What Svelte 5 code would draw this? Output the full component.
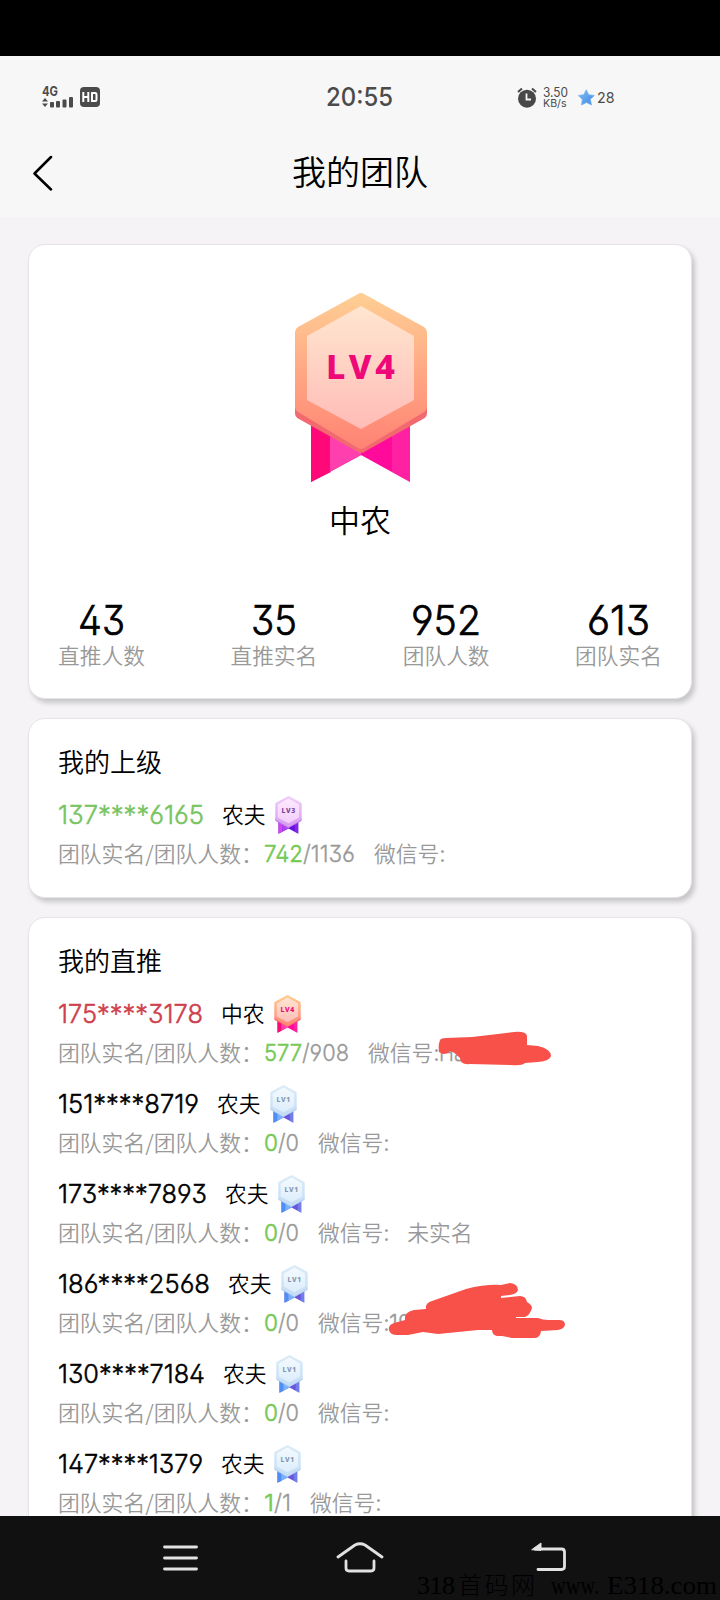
<script>
  const stats = [
    { value: '43', label: '直推人数', width: 47 },
    { value: '35', label: '直推实名', width: 46 },
    { value: '952', label: '团队人数', width: 70 },
    { value: '613', label: '团队实名', width: 63 },
  ];

  const leader = { phone: '137****6165', phoneWidth: 146, tone: 'green', rank: '农夫', level: 3, real: '742', realWidth: 39, total: '/1136', totalWidth: 52, note: '' };

  const members = [
    { phone: '175****3178', phoneWidth: 145, tone: 'red', rank: '中农', level: 4, real: '577', realWidth: 38, total: '/908', totalWidth: 47, note: 'Ha', noteWidth: 26 },
    { phone: '151****8719', phoneWidth: 141, tone: 'black', rank: '农夫', level: 1, real: '0', realWidth: 14, total: '/0', totalWidth: 21, note: '' },
    { phone: '173****7893', phoneWidth: 149, tone: 'black', rank: '农夫', level: 1, real: '0', realWidth: 14, total: '/0', totalWidth: 21, note: '', status: '未实名' },
    { phone: '186****2568', phoneWidth: 152, tone: 'black', rank: '农夫', level: 1, real: '0', realWidth: 14, total: '/0', totalWidth: 21, note: '19', noteWidth: 22 },
    { phone: '130****7184', phoneWidth: 147, tone: 'black', rank: '农夫', level: 1, real: '0', realWidth: 14, total: '/0', totalWidth: 21, note: '' },
    { phone: '147****1379', phoneWidth: 145, tone: 'black', rank: '农夫', level: 1, real: '1', realWidth: 10, total: '/1', totalWidth: 17, note: '' },
  ];

  const palettes = {
    1: { rimA: '#dcecf7', rimB: '#c3dcf6', faceA: '#f4faff', faceB: '#dcedfb', edge: '#b5d0f2', left: '#4f8ef5', midA: '#79b2fb', right: '#6a55dd', text: '#8796b0' },
    3: { rimA: '#eed0f8', rimB: '#d79af2', faceA: '#fdeaff', faceB: '#f3cdfc', edge: '#c07be8', left: '#d345e8', midA: '#a845ee', right: '#6410e0', text: '#76459c' },
    4: { rimA: '#ffcf94', rimB: '#ff8274', faceA: '#ffe6d0', faceB: '#ffbcb7', edge: '#f26a70', left: '#ff0878', midA: '#ff3fae', right: '#ff0a9a', text: '#ee0878' },
  };
</script>

{#snippet fit(text, width, size, cls)}
  <svg class={cls} {width} height={size} overflow="visible">
    <text x="0" y={size * 0.86} font-size={size} textLength={width} lengthAdjust="spacingAndGlyphs">{text}</text>
  </svg>
{/snippet}

{#snippet badge(level, id, w, h)}
  {@const c = palettes[level]}
  <svg width={w} height={h} viewBox="0 0 132 190" class="badge">
    <defs>
      <linearGradient id="{id}-rim" x1="0" y1="0" x2="0" y2="1"><stop offset="0" stop-color={c.rimA} /><stop offset="1" stop-color={c.rimB} /></linearGradient>
      <linearGradient id="{id}-face" x1="0" y1="0" x2="0" y2="1"><stop offset="0" stop-color={c.faceA} /><stop offset="1" stop-color={c.faceB} /></linearGradient>
    </defs>
    <path d="M16 118H115V189L66 162L16 189Z" fill={c.right} />
    <path d="M16 118H36V179L16 189Z" fill={c.left} />
    <path d="M35 128L66 150V162L35 179Z" fill={c.midA} />
    <path d="M97 134L115 125V189L97 179Z" fill={c.midA} opacity="0.45" />
    <path d="M0 114H132V120Q132 124 128 126L69 159Q66 161 63 159L4 126Q0 124 0 120Z" fill={c.edge} />
    <path d="M63 1Q66 -1 69 1L129 34Q132 36 132 39V114Q132 117 129 119L69 155Q66 157 63 155L3 119Q0 117 0 114V39Q0 36 3 34Z" fill="url(#{id}-rim)" />
    <path d="M66 13L119 43V107L66 136L12 107V43Z" fill="url(#{id}-face)" />
    <text class="lv" x="31" y="86" textLength="69" font-size="34" font-weight="800" fill={c.text}>LV{level}</text>
  </svg>
{/snippet}

{#snippet person(p, id)}
  <div class="person">
    <div class="name-line {p.tone}">
      {@render fit(p.phone, p.phoneWidth, 26, 'num')}
      <span class="rank">{p.rank}</span>
      {@render badge(p.level, id, 27, 38)}
    </div>
    <div class="detail">
      <span class="cap">团队实名<i>/</i>团队人数：</span>
      <span class="real">{@render fit(p.real, p.realWidth, 23, 'num')}</span>
      {@render fit(p.total, p.totalWidth, 23, 'num')}
      <span class="wechat">微信号:</span>
      {#if p.note}{@render fit(p.note, p.noteWidth, 23, 'num')}{/if}
      {#if p.status}<span class="status-note">{p.status}</span>{/if}
    </div>
  </div>
{/snippet}

<div class="screen">
  <div class="notch"></div>
  <header>
    <div class="statusbar">
      <div class="left">
        <svg class="signal" width="32" height="24" viewBox="0 0 32 24">
          <text x="0" y="11" font-size="13" font-weight="700" textLength="16" lengthAdjust="spacingAndGlyphs">4G</text>
          <path d="M0 16.5L3 13L6 16.5ZM0 18.5H6L3 22Z" />
          <rect x="8" y="17" width="4" height="5.500" rx="1" />
          <rect x="14" y="16" width="4" height="6.500" rx="1" />
          <rect x="20.5" y="14.5" width="4" height="8" rx="1" />
          <rect x="27" y="12" width="4" height="10.5" rx="1" />
        </svg>
        <svg width="20" height="20" viewBox="0 0 20 20">
          <rect width="20" height="20" rx="4" fill="#4b4b4b" />
          <path d="M3.3 5V15M8.3 5V15M3.3 10H8.3M11.2 6H15Q16.5 6 16.5 7.5V12.5Q16.5 14 15 14H12V6" stroke="#fff" stroke-width="2" fill="none" />
        </svg>
      </div>
      <div class="time">{@render fit('20:55', 67, 25.5, 'num plain')}</div>
      <div class="right">
        <svg width="20" height="21" viewBox="0 0 20 21">
          <circle cx="10" cy="11.7" r="9" fill="#484848" />
          <path d="M1 5L5 1.5M15 1.5L19 5" stroke="#484848" stroke-width="2" />
          <path d="M9.5 6.5V12.5H14" fill="none" stroke="#f6f6f6" stroke-width="1.8" />
        </svg>
        <div class="speed">
          {@render fit('3.50', 25, 12.5, 'num plain')}
          {@render fit('KB/s', 23.5, 10.5, 'num plain')}
        </div>
        <svg class="star" width="17" height="17" viewBox="0 0 17 17">
          <defs><linearGradient id="star-fill" x1="0" y1="0" x2="1" y2="1"><stop offset="0" stop-color="#82bdf5" /><stop offset="1" stop-color="#3f87e3" /></linearGradient></defs>
          <path d="M8.2 0.8L10.7 5.7L16.3 6.5L12.4 10.3L13.5 16L8.5 13.5L3.5 16L4.3 10.4L0.4 6.6L5.8 5.7Z" fill="url(#star-fill)" stroke="#76b2f0" stroke-width="0.8" stroke-linejoin="round" />
        </svg>
        {@render fit('28', 17.5, 15, 'num plain')}
      </div>
    </div>
    <div class="titlebar">
      <svg class="back" width="22" height="38" viewBox="0 0 22 38" fill="none" stroke="#000" stroke-width="2.5" stroke-linecap="round" stroke-linejoin="round"><path d="M19 4L2.500 20.500L19 36.500" /></svg>
      <h1>我的团队</h1>
    </div>
  </header>

  <main>
    <section class="card summary">
      {@render badge(4, 'main', 132, 190)}
      <div class="title">中农</div>
      <div class="stats">
        {#each stats as s}
          <div class="stat">
            {@render fit(s.value, s.width, 41, 'num')}
            <span>{s.label}</span>
          </div>
        {/each}
      </div>
    </section>

    <section class="card upper">
      <h2>我的上级</h2>
      {@render person(leader, 'leader')}
    </section>

    <section class="card direct">
      <h2>我的直推</h2>
      {#each members as m, i}
        {@render person(m, 'm' + i)}
      {/each}
      <svg class="scribble one" width="114" height="36" viewBox="0 0 114 36">
        <path d="M2 9Q3 7 8 7L34 6L60 3L76 1Q88 0 89 5V14L100 15Q113 18 113 25Q112 30 100 31L87 32Q84 35 73 34L32 33Q22 34 22 27Q15 20 12 20Q10 23 5 23L1 21Q0 14 2 9Z" />
      </svg>
      <svg class="scribble two" width="177" height="56" viewBox="0 0 177 56">
        <path d="M1 47Q0 42 6 40L17 37Q16 29 26 27L38 26Q37 20 44 18L78 6Q98 1 113 2L122 0Q130 1 130 7Q129 11 122 12L113 13V15L132 13Q138 13 139 19Q144 22 144 25Q142 32 137 34H128V35L150 35Q155 37 160 37L171 37Q177 37 177 42Q176 46 170 47L153 48Q152 55 147 55H124L114 53H109Q104 52 104 47L90 47L50 51L35 49L20 52H9Q2 52 1 47Z" />
      </svg>
    </section>
  </main>

  <footer>
    <div class="nav">
      <svg width="36" height="30" viewBox="0 0 36 30"><path d="M2.500 4H34.500M2.500 15H34.500M2.500 26H34.500" /></svg>
      <svg class="home" width="48" height="34" viewBox="0 0 48 34"><path d="M2 16L19 4Q24 1.500 29 4L46 16M10 20V27Q10 30 13 30H35Q38 30 38 27V20" /></svg>
      <svg width="36" height="32" viewBox="0 0 36 32"><path d="M7 27.500H30.500Q33.500 27.500 33.500 24.500V10Q33.500 7 30.500 7H4" /><path class="solid" d="M1 7.500L10 1V8Z" /></svg>
    </div>
    <svg class="watermark" width="304" height="30" viewBox="0 0 304 30">
      <text x="1" y="24" textLength="38">318</text>
      <text x="42" y="24" class="han" textLength="77">首码网</text>
      <text x="135" y="24" textLength="48" lengthAdjust="spacingAndGlyphs">www.</text>
      <text x="191" y="24" textLength="110" lengthAdjust="spacingAndGlyphs">E318.com</text>
    </svg>
  </footer>
</div>

<style>
  :global(body) { margin: 0; background: #f5f3f6; }
  .screen {
    width: 720px; height: 1600px; overflow: hidden; display: flex; flex-direction: column;
    background: #f5f3f6; color: #000;
    font-family: Inter, "Noto Sans CJK SC", sans-serif; font-weight: 350;
  }
  svg { display: block; flex: none; }
  .num { fill: currentColor; stroke: currentColor; stroke-width: 0.35; font-feature-settings: "ss01"; }
  .plain { font-feature-settings: normal; stroke: none; }
  .lv { font-family: "Noto Sans", sans-serif; }
  .notch { height: 56px; background: #000; flex: none; }
  header { height: 161px; background: #f7f7f7; flex: none; }
  .statusbar { display: grid; grid-template-columns: 1fr 68px 1fr; height: 82px; align-items: center; color: #4b4b4b; }
  .left { display: flex; align-items: center; gap: 6px; padding-left: 42px; }
  .signal { fill: #4b4b4b; }
  .time { font-weight: 500; }
  .right { display: flex; align-items: center; padding-left: 123px; font-weight: 400; }
  .speed { display: flex; flex-direction: column; margin: 0 10px 0 6px; width: 25px; }
  .star { margin-right: 2px; }
  .titlebar { display: grid; grid-template-columns: 32px 1fr 32px; align-items: center; height: 68px; }
  .back { justify-self: start; margin-left: 32px; }
  h1 { margin: 0; padding-bottom: 2px; font: 350 34px/48px "Noto Sans CJK SC", sans-serif; text-align: center; }
  main { flex: 1; min-height: 0; overflow: hidden; padding: 27px 28px 0; display: flex; flex-direction: column; gap: 19px; }
  .card {
    flex: none; background: #fff; border-radius: 17px; border: 1px solid #e5e4e6; box-sizing: border-box;
    box-shadow: 3px 4px 5px rgba(0, 0, 0, 0.19); padding: 24px 29px 0;
  }
  .summary { height: 455px; padding-top: 48px; display: flex; flex-direction: column; align-items: center; }
  .summary > .badge { margin-left: 2px; }
  .title { font: 350 31px/40px "Noto Sans CJK SC", sans-serif; margin-top: 16px; }
  .stats { align-self: stretch; display: flex; justify-content: space-between; margin-top: 61px; }
  .stat { width: 87px; display: flex; flex-direction: column; align-items: center; }
  .stat .num { stroke-width: 0.7; }
  .stat span { font: 350 21.700px/30px "Noto Sans CJK SC", sans-serif; color: #999; margin-top: -1px; white-space: nowrap; }
  .upper { height: 180px; }
  .direct { height: 720px; position: relative; }
  h2 { margin: 0 0 17px; font: 350 26px/36px "Noto Sans CJK SC", sans-serif; }
  .person { height: 90px; }
  .name-line { display: flex; align-items: center; height: 38px; }
  .name-line .num { stroke-width: 0.5; }
  .rank { font: 350 21.800px/32px "Noto Sans CJK SC", sans-serif; color: #000; margin: 0 9.500px 3px 18px; }
  .green { color: #79c462; }
  .red { color: #cf404d; }
  .black { color: #000; }
  .detail { display: flex; align-items: center; height: 28px; margin-top: 5px; color: #999; font: 350 21.800px/28px "Noto Sans CJK SC", sans-serif; white-space: nowrap; }
  .detail .num, .stat .num, .name-line .num { font-family: Inter, sans-serif; }
  .detail i { font-style: normal; }
  .cap { width: 206px; }
  .real { color: #76c956; }
  .real .num { stroke-width: 0.6; }
  .wechat { margin-left: 19px; }
  .status-note { margin-left: 18px; }
  .scribble { position: absolute; fill: #f7514a; }
  .one { left: 409px; top: 113px; }
  .two { left: 359px; top: 365px; }
  footer { height: 84px; background: #111; flex: none; position: relative; }
  .nav { display: flex; align-items: center; height: 84px; justify-content: space-between; padding: 0 153px 0 162px; }
  .nav svg { fill: none; stroke: #e2e2e2; stroke-width: 2.8; stroke-linecap: round; stroke-linejoin: round; }
  .nav .home { margin-right: 9px; }
  .nav .solid { fill: #e2e2e2; stroke-width: 1; }
  .watermark { position: absolute; right: 0; bottom: 0; font-family: "Liberation Serif", serif; font-size: 26px; fill: #000; font-weight: 400; }
  .watermark .han { font-family: "Noto Sans CJK SC", sans-serif; font-weight: 300; font-size: 24px; }
</style>
